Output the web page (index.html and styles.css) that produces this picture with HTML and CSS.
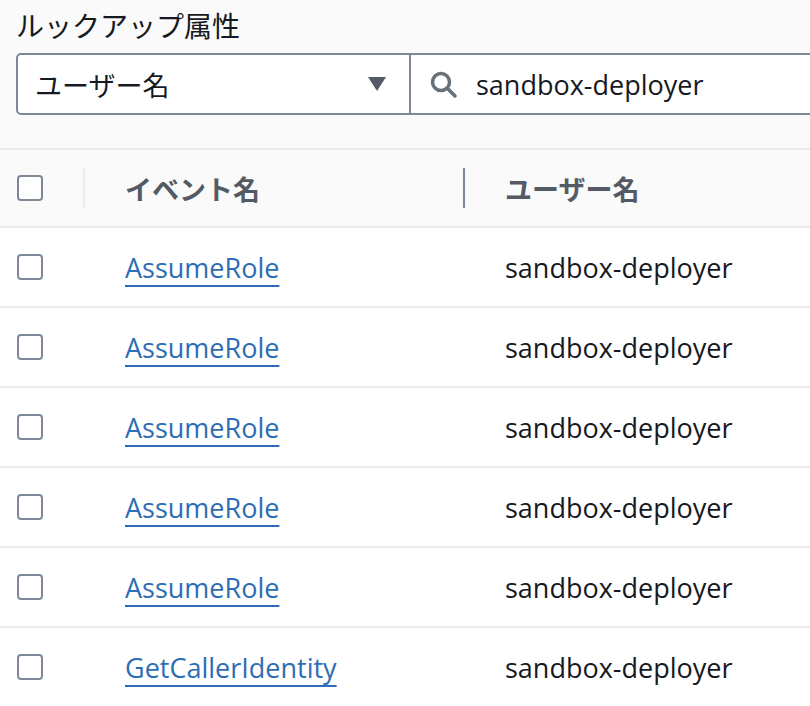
FILE: index.html
```html
<!DOCTYPE html>
<html lang="ja">
<head>
    <meta charset="utf-8">
    <title>イベント履歴</title>
    <link rel="stylesheet" href="styles.css">
</head>
<body>
    <div class="filter">
        <div class="filter-label">ルックアップ属性</div>
        <div class="filter-controls">
            <div class="select">
                <span>ユーザー名</span>
                <svg class="caret" width="20" height="16" viewBox="0 0 20 16">
                    <path d="M1 1 H19 L10 15 Z" fill="#545b64"/>
                </svg>
            </div>
            <div class="search">
                <svg class="search-icon" width="30" height="30" viewBox="0 0 30 30">
                    <circle cx="12" cy="12" r="8.5" fill="none" stroke="#687078" stroke-width="3.5"/>
                    <path d="M18.5 18.5 L26 26" stroke="#687078" stroke-width="3.5" stroke-linecap="round"/>
                </svg>
                <span>sandbox-deployer</span>
            </div>
        </div>
    </div>

    <div class="table">
        <div class="row head">
            <div class="cell check"><span class="checkbox"></span></div>
            <div class="cell col-event"><span class="divider light"></span>イベント名</div>
            <div class="cell col-user"><span class="divider"></span>ユーザー名</div>
        </div>
        <div class="row">
            <div class="cell check"><span class="checkbox"></span></div>
            <div class="cell col-event"><a href="#">AssumeRole</a></div>
            <div class="cell col-user">sandbox-deployer</div>
        </div>
        <div class="row">
            <div class="cell check"><span class="checkbox"></span></div>
            <div class="cell col-event"><a href="#">AssumeRole</a></div>
            <div class="cell col-user">sandbox-deployer</div>
        </div>
        <div class="row">
            <div class="cell check"><span class="checkbox"></span></div>
            <div class="cell col-event"><a href="#">AssumeRole</a></div>
            <div class="cell col-user">sandbox-deployer</div>
        </div>
        <div class="row">
            <div class="cell check"><span class="checkbox"></span></div>
            <div class="cell col-event"><a href="#">AssumeRole</a></div>
            <div class="cell col-user">sandbox-deployer</div>
        </div>
        <div class="row">
            <div class="cell check"><span class="checkbox"></span></div>
            <div class="cell col-event"><a href="#">AssumeRole</a></div>
            <div class="cell col-user">sandbox-deployer</div>
        </div>
        <div class="row">
            <div class="cell check"><span class="checkbox"></span></div>
            <div class="cell col-event"><a href="#">GetCallerIdentity</a></div>
            <div class="cell col-user">sandbox-deployer</div>
        </div>
    </div>
</body>
</html>
```

FILE: styles.css
```css
:root {
    --bg: #fafafa;
    --surface: #fff;
    --line: #e9ebed;
    --border: #7d8998;
    --text: #16191f;
    --text-head: #545b64;
    --link: #2d6db5;
}

body {
    margin: 0;
    background: var(--bg);
    color: var(--text);
    font-family: "Open Sans", "Noto Sans CJK JP", sans-serif;
    font-size: 27px;
    overflow: hidden;
}

.filter {
    padding: 5px 0 0 16px;
    height: 150px;
    box-sizing: border-box;
    border-bottom: 2px solid var(--line);
}

.filter-label {
    font-family: "Noto Sans CJK JP", sans-serif;
    font-size: 28px;
    line-height: 40px;
    margin-bottom: 8px;
}

.filter-controls {
    display: flex;
    height: 62px;
}

.select {
    width: 395px;
    box-sizing: border-box;
    display: flex;
    align-items: center;
    justify-content: space-between;
    padding: 0 22px 0 17px;
    background: var(--surface);
    border: 2px solid var(--border);
    border-radius: 5px 0 0 5px;
    font-family: "Noto Sans CJK JP", sans-serif;
    font-size: 27px;
}

.search {
    flex: 1;
    display: flex;
    align-items: center;
    gap: 17px;
    padding-left: 18px;
    background: var(--surface);
    border: 2px solid var(--border);
    border-left: none;
    border-right: none;
}

.search-icon {
    margin-top: 1px;
}

.row {
    display: grid;
    grid-template-columns: 83px 380px 1fr;
    height: 80px;
    background: var(--surface);
    border-top: 2px solid var(--line);
    box-sizing: border-box;
}

.row.head {
    height: 76px;
    background: var(--bg);
    color: var(--text-head);
    font-family: "Noto Sans CJK JP", sans-serif;
    font-weight: bold;
    font-size: 27px;
    border-top: none;
}

.cell {
    display: flex;
    align-items: center;
    position: relative;
}

.check {
    padding-left: 17px;
}

.col-event,
.col-user {
    padding-left: 42px;
}

.checkbox {
    width: 26px;
    height: 26px;
    box-sizing: border-box;
    border: 2px solid var(--border);
    border-radius: 4px;
    background: var(--surface);
}

.divider {
    position: absolute;
    left: 0;
    top: 18px;
    bottom: 18px;
    width: 2px;
    background: var(--border);
}

.divider.light {
    background: var(--line);
}

a {
    color: var(--link);
    text-decoration: underline;
    text-decoration-thickness: 2px;
    text-underline-offset: 7px;
}
```
